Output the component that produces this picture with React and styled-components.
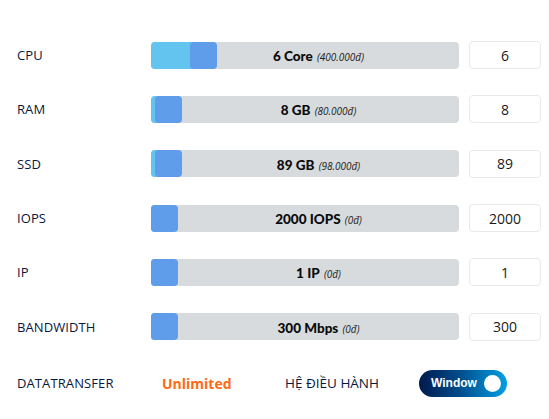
import React, { useState } from 'react'
import styled, { createGlobalStyle } from 'styled-components'

const GlobalStyle = createGlobalStyle`
    body{
        margin:0;
        background:#fff;
        font-family:"Open Sans","Noto Sans",sans-serif;
    }
`

const TRACK = 308
const THUMB = 27

const specs = [
    { key: 'cpu', label: 'CPU', value: 6, min: 1, max: 37, unit: 'Core', price: '400.000đ' },
    { key: 'ram', label: 'RAM', value: 8, min: 1, max: 500, unit: 'GB', price: '80.000đ' },
    { key: 'ssd', label: 'SSD', value: 89, min: 20, max: 5000, unit: 'GB', price: '98.000đ' },
    { key: 'iops', label: 'IOPS', value: 2000, min: 2000, max: 20000, unit: 'IOPS', price: '0đ' },
    { key: 'ip', label: 'IP', value: 1, min: 1, max: 16, unit: 'IP', price: '0đ' },
    { key: 'bw', label: 'BANDWIDTH', value: 300, min: 300, max: 10000, unit: 'Mbps', price: '0đ' },
]

function SpecRow({ spec, value, onChange }) {
    const ratio = Math.min(1, Math.max(0, (value - spec.min) / (spec.max - spec.min)))
    const offset = Math.round(ratio * (TRACK - THUMB))
    return (
        <Row>
            <Label>{spec.label}</Label>
            <Track>
                <Fill style={{ width: offset + 4 }} />
                <Thumb style={{ left: offset }} />
                <TrackText>
                    <b>{value} {spec.unit}</b> <i>({spec.price})</i>
                </TrackText>
            </Track>
            <Input value={value} onChange={(e) => onChange(spec.key, e.target.value)} />
        </Row>
    )
}

function App() {
    const [values, setValues] = useState(
        Object.fromEntries(specs.map((s) => [s.key, s.value]))
    )
    const [os, setOs] = useState(true)

    function update(key, v) {
        setValues((prev) => ({ ...prev, [key]: Number(v) || 0 }))
    }

    return (
        <>
            <GlobalStyle />
            <Wrapper>
                {specs.map((s) => (
                    <SpecRow key={s.key} spec={s} value={values[s.key]} onChange={update} />
                ))}
                <BottomRow>
                    <Label>DATATRANSFER</Label>
                    <Unlimited>Unlimited</Unlimited>
                    <OsLabel>HỆ ĐIỀU HÀNH</OsLabel>
                    <Toggle onClick={() => setOs(!os)}>
                        <span>Window</span>
                        <Knob />
                    </Toggle>
                </BottomRow>
            </Wrapper>
        </>
    )
}

export default App

const Wrapper = styled.div`
    padding:28px 0 0 17px;
    width:532px;
`

const Row = styled.div`
    display:grid;
    grid-template-columns:124px ${TRACK}px 72px;
    column-gap:10px;
    align-items:center;
    height:54.3px;
`

const Label = styled.div`
    font-size:13px;
    font-weight:500;
    color:#081840;
    letter-spacing:0.1px;
`

const Track = styled.div`
    position:relative;
    height:27px;
    background:#d7dbdd;
    border-radius:4px;
    display:flex;
    align-items:center;
    justify-content:center;
    padding-left:${THUMB}px;
    box-sizing:border-box;
`

const Fill = styled.div`
    position:absolute;
    left:0;
    top:0;
    bottom:0;
    background:#62c4ef;
    border-radius:4px 0 0 4px;
`

const Thumb = styled.div`
    position:absolute;
    top:0;
    width:${THUMB}px;
    height:27px;
    background:#5f9cea;
    border-radius:4px;
`

const TrackText = styled.div`
    position:relative;
    color:#0a0a0a;
    b{
        font-family:Lato,"Open Sans",sans-serif;
        font-size:13.5px;
        font-weight:900;
    }
    i{
        font-size:10px;
        color:#222;
    }
`

const Input = styled.input`
    box-sizing:border-box;
    width:72px;
    height:28px;
    border:1px solid #e7e9eb;
    border-radius:4px;
    text-align:center;
    font-family:"Open Sans","Noto Sans",sans-serif;
    font-size:14px;
    color:#1a1a1a;
    outline:none;
    padding:0;
`

const BottomRow = styled.div`
    display:flex;
    align-items:center;
    height:57px;
    margin-top:1px;
    ${Label}{
        width:145px;
    }
`

const Unlimited = styled.div`
    font-size:14px;
    font-weight:700;
    color:#ff6a13;
    width:123px;
`

const OsLabel = styled.div`
    font-size:13.5px;
    font-weight:500;
    color:#081840;
    width:134px;
`

const Toggle = styled.div`
    width:88px;
    height:27px;
    border-radius:14px;
    background:linear-gradient(90deg,#001a4c 0%,#024b8a 45%,#00a0e3 100%);
    display:flex;
    align-items:center;
    justify-content:space-between;
    padding:0 6px 0 12px;
    box-sizing:border-box;
    cursor:pointer;
    span{
        color:#fff;
        font-family:"Liberation Sans",Arial,sans-serif;
        font-weight:700;
        font-size:12px;
    }
`

const Knob = styled.div`
    width:17px;
    height:17px;
    border-radius:50%;
    background:#fff;
`
